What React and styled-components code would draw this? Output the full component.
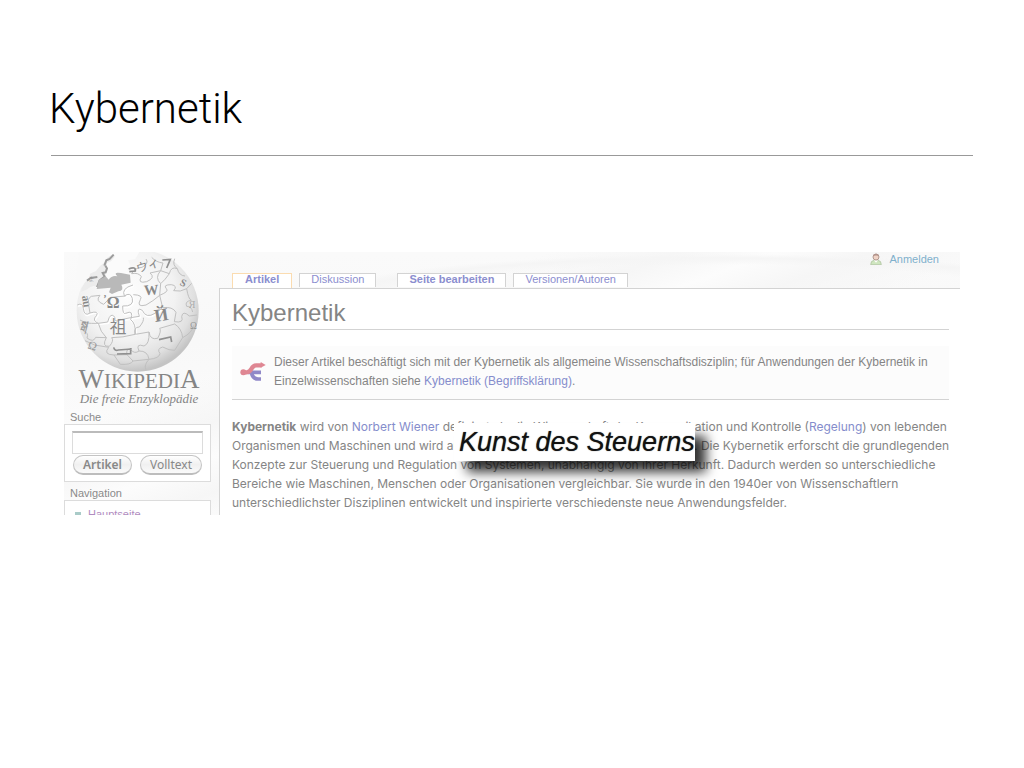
import React from "react";
import styled, { createGlobalStyle } from "styled-components";

const GlobalStyle = createGlobalStyle`
  * { box-sizing: border-box; }
  body {
    margin: 0;
    background: #fff;
    font-family: "Liberation Sans", Arial, sans-serif;
  }
  a { text-decoration: none; }
  a:hover { text-decoration: underline; }
`;

const Slide = styled.main`
  min-height: 100vh;
  padding: 80px 51px 40px;
`;

const SlideTitle = styled.h1`
  margin: 0;
  padding-bottom: 18px;
  border-bottom: 1px solid #999;
  color: #000;
  font-family: Roboto, "Liberation Sans", sans-serif;
  font-size: 42px;
  font-weight: 300;
  line-height: 57px;
  text-indent: -2px;
`;

const Clip = styled.section`
  position: relative;
  display: flex;
  margin: 96px 13px 0;
  overflow: hidden;
  background:
    radial-gradient(ellipse 420px 50px at 73% 52px, transparent 78%, #f5f5f5 92%, transparent 100%),
    linear-gradient(160deg, transparent 30%, #f6f6f6 38%, #fcfcfc 44%, #f6f6f6 50%, transparent 58%),
    linear-gradient(#fafafa, #f8f8f8 90px, #fff 100%);
`;

const Sidebar = styled.aside`
  flex: 0 0 155px;
  padding-right: 8px;
`;

const Logo = styled.a`
  display: block;
  height: 159px;
  color: #858585;
  font-family: "Liberation Serif", "Times New Roman", serif;
  text-align: center;
  white-space: nowrap;
  &:hover { text-decoration: none; }
  svg { display: block; margin: 0 0 0 12px; }
`;

const WordMark = styled.span`
  display: block;
  margin-top: -4px;
  padding-left: 3px;
  font-size: 21px;
  line-height: 21px;
  big { font-size: 27px; }
`;

const Tagline = styled.em`
  display: block;
  padding-left: 3px;
  font-size: 13px;
  line-height: 13px;
`;

const BoxLabel = styled.label`
  display: block;
  margin: 0;
  padding-left: 6px;
  color: #8a8a8a;
  font-size: 11px;
  font-weight: 400;
  line-height: 13px;
`;

const SearchBox = styled.form`
  height: 58px;
  margin: 0 0 5px;
  padding: 6px 7px 0;
  border: 1px solid #dcdcdc;
  background: #fff;
`;

const SearchInput = styled.input`
  display: block;
  width: 100%;
  height: 23px;
  border: 1px solid #dcdcdc;
  border-top: 2px solid #bbb;
  background: #fff;
`;

const ButtonRow = styled.div`
  display: flex;
  justify-content: space-between;
  padding: 1px 1px 0;
`;

const SearchButton = styled.button`
  width: ${(p) => (p.$primary ? "59px" : "62px")};
  height: 20px;
  padding: 0;
  border: 1px solid #c4c4c4;
  border-bottom: 2px solid #bdbdbd;
  border-radius: 10px;
  background: linear-gradient(#fff, #f0f0f0 50%, #fafafa);
  color: #888;
  font-family: "Noto Sans", sans-serif;
  font-size: 12px;
  font-weight: ${(p) => (p.$primary ? 600 : 400)};
  line-height: 16px;
`;

const NavBox = styled.ul`
  height: 15px;
  margin: 0;
  padding: 7px 0 0 10px;
  overflow: hidden;
  border: 1px solid #dcdcdc;
  border-bottom: 0;
  background: #fff;
  list-style: none;
  li {
    display: flex;
    align-items: center;
    gap: 7px;
    font-size: 11px;
    line-height: 13px;
  }
  li::before {
    content: "";
    width: 6px;
    height: 5px;
    background: #a9cbc8;
  }
  a { color: #b08cc0; }
`;

const Main = styled.div`
  display: flex;
  flex: 1;
  flex-direction: column;
  min-width: 0;
`;

const UserBar = styled.div`
  display: flex;
  justify-content: flex-end;
  align-items: center;
  gap: 7px;
  height: 14px;
  padding-right: 21px;
  font-size: 11px;
  line-height: 12px;
  a { color: #7fb0cc; }
`;

const Tabs = styled.nav`
  display: flex;
  align-items: flex-start;
  gap: 7px;
  height: 22px;
  padding: 7px 0 0 13px;
`;

const Tab = styled.a`
  height: ${(p) => (p.$current ? "15px" : "14px")};
  margin-left: ${(p) => (p.$apart ? "14px" : "0")};
  padding: 0 ${(p) => (p.$current ? "12px" : "11px")};
  border: 1px solid ${(p) => (p.$current ? "#fbdcb0" : "#d3d3d3")};
  border-bottom: 0;
  background: #fff;
  color: #8b8ecf;
  font-size: 11px;
  font-weight: ${(p) => (p.$strong ? 700 : 400)};
  line-height: 11px;
  white-space: nowrap;
`;

const Article = styled.article`
  flex: 1;
  padding: 8px 11px 0 12px;
  border-top: 1px solid #d3d3d3;
  border-left: 1px solid #d3d3d3;
  background: #fff;
  color: #858585;
  font-size: 12px;
  line-height: 19px;
  a { color: #858dcc; }
`;

const ArticleTitle = styled.h2`
  margin: 0 0 16px;
  padding-bottom: 1px;
  border-bottom: 1px solid #d3d3d3;
  font-size: 24px;
  font-weight: 400;
  line-height: 31px;
`;

const Notice = styled.div`
  display: flex;
  align-items: center;
  gap: 8px;
  height: 54px;
  padding: 0 0 2px 8px;
  border-bottom: 1px solid #d3d3d3;
  background: #fcfcfc;
  white-space: nowrap;
`;

const Lead = styled.p`
  margin: 17px 0 3px;
  font-family: Inter, "Liberation Sans", sans-serif;
  font-size: 12px;
  white-space: nowrap;
`;

const Callout = styled.strong`
  position: absolute;
  top: 171px;
  left: 390px;
  width: 241px;
  height: 38px;
  padding-left: 5px;
  background: #fff;
  box-shadow: 12px 12px 12px -1px rgba(0, 0, 0, 0.8);
  color: #111;
  font-size: 27px;
  font-style: italic;
  font-weight: 400;
  line-height: 38px;
  text-shadow: 0 0 1px #555;
  white-space: nowrap;
`;

function Globe() {
  return (
    <svg width="124" height="121" viewBox="50 21 372 363" aria-hidden="true">
      <defs>
        <radialGradient id="ball" cx="0.42" cy="0.36" r="0.64">
          <stop offset="0" stopColor="#fdfdfd" />
          <stop offset="0.6" stopColor="#f2f2f2" />
          <stop offset="0.85" stopColor="#e0e0e0" />
          <stop offset="1" stopColor="#c4c4c4" />
        </radialGradient>
      </defs>
      <circle cx="235" cy="197" r="183" fill="url(#ball)" />
      <path d="M60 10L166 22Q158 42 143 48Q130 70 137 92L120 101L114 130Q100 120 84 133L66 127L50 90Z" fill="#f9f9f9" />
      <path d="M148 21L240 21L228 42L206 46L213 62L203 76L216 86L210 116L182 120L180 139L160 143L151 127L114 130L120 101L137 92Q130 70 143 48Z" fill="#fbfbfb" />
      <path d="M66 132Q73 112 91 98L92 86L110 78L123 62L137 52Q139 40 151 33L163 27L166 35L155 49L143 53Q144 70 137 82L141 97L126 107L113 127Q100 118 84 133L66 140Z" fill="#ececec" />
      <path d="M135 62L141 46L151 42L163 29M138 62L143 70L139 82L130 84L136 95L121 106L113 126M83 107L94 99L114 96" fill="none" stroke="#9c9c9c" strokeWidth="6" />
      <path d="M118 105L139 94L148 104Q158 90 174 94Q160 80 185 84L212 89L214 113L186 119Q196 136 177 139L158 147L149 142L154 128L112 132Z" fill="#b9b9b9" />
      <g fill="none" stroke="#fff" strokeWidth="6" transform="translate(2 3)">
        <path d="M221 120Q185 130 195 153Q213 140 219 160Q225 185 190 183Q190 210 199 205Q225 193 214 224Q230 235 228 268" />
        <path d="M54 180Q70 172 72 190Q75 216 92 204Q119 196 112 211Q96 227 117 235L145 231Q153 199 167 217Q164 235 185 224L214 218L240 214Q230 184 249 196Q260 222 287 205L308 190" />
      </g>
      <g fill="none" stroke="#c0c0c0" strokeWidth="3">
        <path d="M221 120Q185 130 195 153Q213 140 219 160Q225 185 190 183Q190 210 199 205Q225 193 214 224Q230 235 228 268" />
        <path d="M54 180Q70 172 72 190Q75 216 92 204Q119 196 112 211Q96 227 117 235L145 231Q153 199 167 217Q164 235 185 224L214 218L240 214Q230 184 249 196Q260 222 287 205L308 190" />
        <path d="M217 86Q238 82 246 95Q233 117 262 110Q290 98 272 84L304 77L330 86Q335 63 354 71Q359 92 377 93" />
        <path d="M222 149Q252 150 243 164Q230 188 260 180Q280 169 301 151L304 116Q285 98 304 77L311 54Q290 52 277 37" />
        <path d="M301 151Q331 139 321 131Q310 119 336 119Q356 122 343 137Q363 142 382 131L397 115" />
        <path d="M301 151L310 188Q340 184 350 202L345 230Q375 235 367 215Q370 195 390 213L413 210" />
        <path d="M382 131Q387 162 396 166Q375 169 382 184Q396 183 400 201" />
        <path d="M73 259Q89 263 83 279Q102 294 109 277L141 278Q126 306 150 304Q165 287 157 278Q190 278 227 268Q222 246 240 246Q255 228 252 218" />
        <path d="M117 235Q123 261 141 278M228 268L269 261Q272 286 295 280Q307 258 301 250L346 237Q367 250 370 278Q399 263 403 241" />
        <path d="M269 261Q271 297 254 303Q228 294 239 318Q265 317 269 343Q300 340 302 326Q291 311 310 306Q330 317 346 316L370 278" />
        <path d="M106 300L148 307Q130 329 164 330L203 329Q199 309 214 314Q226 328 239 318M164 330Q176 348 183 358Q215 360 221 348M203 329L221 348L269 343Q254 359 259 373" />
        <path d="M90 180Q82 161 96 154L122 151Q106 168 133 178L154 157M92 204L88 180M199 153L154 157" />
        <path d="M260 42Q270 55 248 67Q226 68 217 86M330 86Q318 104 304 116M346 41Q338 60 354 71M62 225Q82 238 96 235L117 235M77 287L106 300" />
      </g>
      <g fill="#888" fontFamily="Liberation Serif, serif">
        <text x="142" y="188" fontSize="48" fontWeight="700">Ω</text>
        <text x="132" y="172" fontSize="30" fontWeight="700">’</text>
        <text x="255" y="151" fontSize="44" fontWeight="700" transform="rotate(-4 255 151)">W</text>
        <text x="288" y="231" fontSize="54" fontWeight="700" transform="rotate(-9 288 231)">Й</text>
        <text x="151" y="265" fontSize="50" fontFamily="Noto Sans CJK JP, sans-serif">祖</text>
        <text x="235" y="84" fontSize="36" fontFamily="Noto Sans CJK JP, sans-serif" transform="rotate(-18 235 84)">ウィ</text>
        <text x="360" y="119" fontSize="31" fontWeight="700" transform="rotate(25 360 119)">S</text>
        <text x="68" y="153" fontSize="34" fontWeight="700" transform="rotate(82 68 153)">au</text>
        <text x="62" y="253" fontSize="32" fontStyle="italic" fontWeight="700" fillOpacity="0.8">སྒ</text>
        <text x="83" y="310" fontSize="36" fillOpacity="0.8" transform="rotate(18 83 310)">Ω</text>
        <text x="388" y="190" fontSize="30" fillOpacity="0.6">Я</text>
        <text x="392" y="252" fontSize="28" fillOpacity="0.8">Ω</text>
        <text x="87" y="107" fontSize="18" fillOpacity="0.6" fontFamily="Noto Sans CJK JP, sans-serif">ま</text>
      </g>
      <g fill="none" stroke="#909090" strokeWidth="5">
        <path d="M299 284L334 276L337 291M163 307Q166 319 177 315L217 312M173 327L214 326L214 309M208 72Q230 63 228 78L210 80M309 45L333 43L322 69" />
      </g>
    </svg>
  );
}

function ForkIcon() {
  return (
    <svg width="26" height="20" viewBox="0 0 78 60" aria-hidden="true">
      <path d="M24 31L34 31Q38 51 54 51L63 51M36 31L63 31" fill="none" stroke="#9088c8" strokeWidth="11" />
      <path d="M9 31L20 31C38 30 31 10 49 10L65 10" fill="none" stroke="#df8793" strokeWidth="13" />
      <path d="M62 0L77 9L62 17Z" fill="#df8793" />
      <circle cx="10" cy="31" r="9" fill="#df8793" />
    </svg>
  );
}

function UserIcon() {
  return (
    <svg width="12" height="12" viewBox="0 0 36 36" aria-hidden="true">
      <path d="M2 35Q2 23 12 22L24 22Q34 23 34 35Z" fill="#cfe6bf" stroke="#a9bd9c" strokeWidth="2" />
      <path d="M12 22L18 29L24 22Z" fill="#fff" />
      <circle cx="18" cy="12" r="9" fill="#f0d3c6" stroke="#b39a90" strokeWidth="3" />
      <path d="M9 10Q10 2 18 2T27 10Q18 5 9 10Z" fill="#b3948c" />
    </svg>
  );
}

export default function App() {
  return (
    <>
      <GlobalStyle />
      <Slide>
        <SlideTitle>Kybernetik</SlideTitle>
        <Clip>
          <Sidebar>
            <Logo href="#start">
              <Globe />
              <WordMark>
                <big>W</big>IKIPEDI<big>A</big>
              </WordMark>
              <Tagline>Die freie Enzyklopädie</Tagline>
            </Logo>
            <BoxLabel htmlFor="search">Suche</BoxLabel>
            <SearchBox onSubmit={(e) => e.preventDefault()}>
              <SearchInput id="search" type="text" />
              <ButtonRow>
                <SearchButton type="submit" $primary>Artikel</SearchButton>
                <SearchButton type="submit">Volltext</SearchButton>
              </ButtonRow>
            </SearchBox>
            <BoxLabel as="h3" id="nav-label">Navigation</BoxLabel>
            <NavBox aria-labelledby="nav-label">
              <li><a href="#hauptseite">Hauptseite</a></li>
            </NavBox>
          </Sidebar>
          <Main>
            <UserBar>
              <UserIcon />
              <a href="#anmelden">Anmelden</a>
            </UserBar>
            <Tabs>
              <Tab href="#artikel" $current $strong>Artikel</Tab>
              <Tab href="#diskussion">Diskussion</Tab>
              <Tab href="#bearbeiten" $apart $strong>Seite bearbeiten</Tab>
              <Tab href="#versionen">Versionen/Autoren</Tab>
            </Tabs>
            <Article>
              <ArticleTitle>Kybernetik</ArticleTitle>
              <Notice>
                <ForkIcon />
                <div>
                  Dieser Artikel beschäftigt sich mit der Kybernetik als allgemeine Wissenschaftsdisziplin; für Anwendungen der Kybernetik in
                  <br />
                  Einzelwissenschaften siehe <a href="#begriff">Kybernetik (Begriffsklärung)</a>.
                </div>
              </Notice>
              <Lead>
                <b>Kybernetik</b> wird von <a href="#wiener">Norbert Wiener</a> definiert als die Wissenschaft der Kommunikation und Kontrolle (<a href="#regelung">Regelung</a>) von lebenden
                <br />
                Organismen und Maschinen und wird auch als die Kunst des Steuerns bezeichnet. Die Kybernetik erforscht die grundlegenden
                <br />
                Konzepte zur Steuerung und Regulation von Systemen, unabhängig von ihrer Herkunft. Dadurch werden so unterschiedliche
                <br />
                Bereiche wie Maschinen, Menschen oder Organisationen vergleichbar. Sie wurde in den 1940er von Wissenschaftlern
                <br />
                unterschiedlichster Disziplinen entwickelt und inspirierte verschiedenste neue Anwendungsfelder.
              </Lead>
            </Article>
          </Main>
          <Callout>Kunst des Steuerns</Callout>
        </Clip>
      </Slide>
    </>
  );
}
